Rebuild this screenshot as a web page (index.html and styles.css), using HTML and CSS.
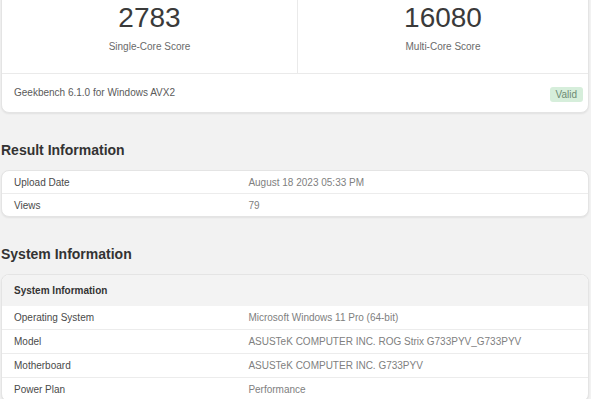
FILE: index.html
```html
<!DOCTYPE html>
<html lang="en">
<head>
    <meta charset="UTF-8">
    <meta name="viewport" content="width=device-width, initial-scale=1.0">
    <title>Geekbench 6 Result</title>
    <link rel="stylesheet" href="styles.css">
</head>
<body>
    <div class="page">
        <div class="card score-card">
            <div class="scores">
                <div class="score">
                    <div class="score-value">2783</div>
                    <div class="score-label">Single-Core Score</div>
                </div>
                <div class="score">
                    <div class="score-value">16080</div>
                    <div class="score-label">Multi-Core Score</div>
                </div>
            </div>
            <div class="score-footer">
                <span class="version">Geekbench 6.1.0 for Windows AVX2</span>
                <span class="badge">Valid</span>
            </div>
        </div>

        <h2>Result Information</h2>
        <div class="card">
            <table class="info-table">
                <tr>
                    <td class="name">Upload Date</td>
                    <td class="value">August 18 2023 05:33 PM</td>
                </tr>
                <tr>
                    <td class="name">Views</td>
                    <td class="value">79</td>
                </tr>
            </table>
        </div>

        <h2>System Information</h2>
        <div class="card">
            <table class="info-table system-table">
                <tr class="head">
                    <th colspan="2">System Information</th>
                </tr>
                <tr>
                    <td class="name">Operating System</td>
                    <td class="value">Microsoft Windows 11 Pro (64-bit)</td>
                </tr>
                <tr>
                    <td class="name">Model</td>
                    <td class="value">ASUSTeK COMPUTER INC. ROG Strix G733PYV_G733PYV</td>
                </tr>
                <tr>
                    <td class="name">Motherboard</td>
                    <td class="value">ASUSTeK COMPUTER INC. G733PYV</td>
                </tr>
                <tr>
                    <td class="name">Power Plan</td>
                    <td class="value">Performance</td>
                </tr>
            </table>
        </div>
    </div>
</body>
</html>
```

FILE: styles.css
```css
body {
    margin: 0;
    background-color: #f2f2f2;
    font-family: 'Liberation Sans', Arial, sans-serif;
    color: #444;
    overflow: hidden;
}
.page {
    padding: 0 2px 0 1px;
}
.card {
    background-color: #fff;
    border: 1px solid #e4e4e4;
    border-radius: 8px;
    box-shadow: 0 1px 2px rgba(0, 0, 0, 0.07);
    overflow: hidden;
}
.score-card {
    margin-top: -12px;
}
.scores {
    display: grid;
    grid-template-columns: 296px 1fr;
    border-bottom: 1px solid #eaeaea;
}
.score {
    text-align: center;
    padding: 13px 0 19px;
}
.score:first-child {
    border-right: 1px solid #eaeaea;
}
.score-value {
    font-size: 28px;
    line-height: 32px;
    color: #3a3a3a;
}
.score-label {
    margin-top: 6px;
    font-size: 10px;
    line-height: 14px;
    color: #6a6a6a;
}
.score-footer {
    display: flex;
    justify-content: space-between;
    align-items: flex-start;
    padding: 11px 5px 10px 12px;
}
.version {
    font-size: 10px;
    line-height: 15px;
    color: #5a5a5a;
}
.badge {
    margin-top: 2px;
    padding: 0 6px;
    border-radius: 3px;
    background-color: #d6eedb;
    color: #6d8a73;
    font-size: 10px;
    line-height: 15px;
}
h2 {
    margin: 27px 0 10px;
    font-size: 14px;
    line-height: 20px;
    color: #333;
}
.info-table {
    width: 100%;
    border-collapse: collapse;
    font-size: 10px;
}
.info-table td {
    height: 22px;
    padding: 0 12px;
    border-top: 1px solid #ececec;
}
.info-table tr:first-child td {
    border-top: none;
}
.info-table .name {
    width: 40%;
    color: #4a4a4a;
}
.info-table .value {
    color: #808080;
}
.system-table td {
    height: 23px;
}
.system-table .head th {
    height: 31px;
    padding: 0 12px;
    background-color: #f3f3f3;
    text-align: left;
    color: #333;
    font-weight: bold;
}
.system-table tr:nth-child(2) td {
    border-top: none;
}
```
